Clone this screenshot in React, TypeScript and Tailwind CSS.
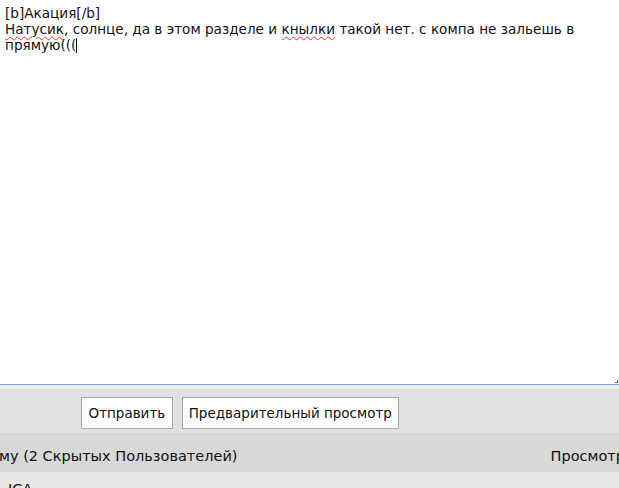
export default function App() {
  const font = { fontFamily: '"DejaVu Sans", Verdana, sans-serif' };
  return (
    <div className="w-[619px] h-[488px] overflow-hidden bg-white text-[#111]" style={font}>
      {/* editor */}
      <div className="relative h-[385px] border-b border-[#7f9fd8] bg-white px-[5px] pt-[5px] text-[13.6px] leading-[16px]">
        <div>[b]Акация[/b]</div>
        <div>
          <span className="underline decoration-wavy decoration-red-500 decoration-1 underline-offset-2">Натусик</span>
          , солнце, да в этом разделе и{" "}
          <span className="underline decoration-wavy decoration-red-500 decoration-1 underline-offset-2">кнылки</span>{" "}
          такой нет. с компа не зальешь в
        </div>
        <div className="flex items-center">
          прямую(((
          <span className="inline-block w-px h-[15px] bg-black" />
        </div>
        <div className="absolute right-[1px] bottom-[1px] w-[3px] h-[3px] border-r border-b border-[#666]" />
      </div>

      {/* buttons */}
      <div className="h-[48px] bg-[#e1e1e1] border-t-[4px] border-[#efefef] flex items-start pl-[81px] pt-[8px] gap-[9px] text-[13.5px]">
        <button className="h-[32px] px-[6.5px] bg-white border border-[#aaaaaa] text-[#111]">Отправить</button>
        <button className="h-[32px] px-[6px] bg-white border border-[#aaaaaa] text-[#111]">Предварительный просмотр</button>
      </div>

      {/* online header */}
      <div className="h-[39px] bg-[#d8d8d8] flex items-center justify-between pt-[8px] text-[14.5px] text-[#111] whitespace-nowrap">
        <span className="-ml-[1px]">му (2 Скрытых Пользователей)</span>
        <span className="-mr-[6px]">Просмотр</span>
      </div>

      <div className="h-[40px] bg-[#e8e8e8] pl-[8px] pt-[7px] text-[14.5px]">ICA</div>
    </div>
  );
}
